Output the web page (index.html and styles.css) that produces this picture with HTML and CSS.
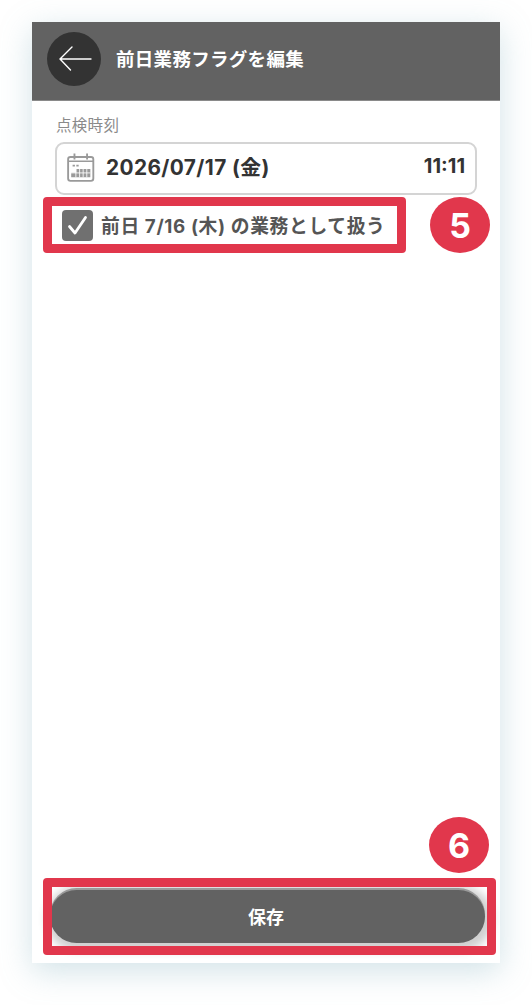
FILE: index.html
```html
<!DOCTYPE html>
<html lang="ja">
<head>
<meta charset="utf-8">
<title>前日業務フラグを編集</title>
<link rel="stylesheet" href="styles.css">
</head>
<body>
<main class="phone">
  <header class="header">
    <button class="back" aria-label="戻る">
      <svg width="54" height="54" viewBox="0 0 54 54" fill="none" stroke="#fff" stroke-width="1.4" stroke-linecap="round"><path d="M13 27H44M25 15L13 27L23.5 38"/></svg>
    </button>
    <h1 class="title">前日業務フラグを編集</h1>
  </header>
  <section class="content">
    <div class="label">点検時刻</div>
    <div class="field">
      <svg class="cal" width="28" height="29" viewBox="0 0 30 31" fill="none">
        <rect x="1.2" y="4.2" width="27" height="25.6" rx="2.5" stroke="#9a9a9a" stroke-width="2"/>
        <path d="M1.500 8.800H28" stroke="#9a9a9a" stroke-width="1.6"/>
        <path d="M8 .5V7M21.500 .5V7" stroke="#9a9a9a" stroke-width="2"/>
        <path d="M6 12.500h2.500v2H6zM10 12.500h2.500v2H10z" fill="#9a9a9a"/>
        <path d="M10 17h15v9H4.500v-5H10z" fill="#9a9a9a"/>
        <path d="M9.500 17v9M13.500 17v9M17.300 17v9M21.200 17v9M4 21.300h21" stroke="#fff" stroke-width=".9"/>
      </svg>
      <span class="date">2026/07/17 (金)</span>
      <span class="time">11:11</span>
    </div>
    <label class="check">
      <span class="box">
        <svg width="31" height="31" viewBox="0 0 31 31" fill="none" stroke="#fff" stroke-width="2.800" stroke-linecap="round" stroke-linejoin="round"><path d="M7.500 16.500L13 23L23.500 7.500"/></svg>
      </span>
      <span class="check-text">前日 7/16 (木) の業務として扱う</span>
    </label>
  </section>
  <footer class="footer">
    <button class="save">保存</button>
  </footer>
</main>
<div class="mark mark-check"></div>
<div class="badge badge-5">5</div>
<div class="badge badge-6">6</div>
<div class="mark mark-save"></div>
</body>
</html>
```
FILE: styles.css
```css
* { box-sizing: border-box; }
html, body { margin: 0; height: 100%; background: #fff; overflow: hidden; }
body {
  position: relative;
  padding: 22px 32px 0;
  font-family: Inter, "Noto Sans CJK JP", sans-serif;
  color: #333;
}
.phone {
  width: 468px;
  height: 941px;
  background: #fff;
  display: flex;
  flex-direction: column;
  box-shadow: 0 8px 30px rgba(120, 170, 185, .34);
}
.header {
  height: 79px;
  flex: none;
  background: #626262;
  border-bottom: 1px solid #8a8a8a;
  display: flex;
  align-items: center;
  gap: 15px;
  padding-left: 15px;
  padding-bottom: 5px;
}
.back {
  width: 54px;
  height: 54px;
  padding: 0;
  border: 0;
  border-radius: 50%;
  background: #333;
}
.back svg { display: block; }
.title {
  margin: 0;
  font-size: 18.5px;
  font-weight: 700;
  line-height: 24px;
  color: #fff;
  letter-spacing: .3px;
}
.content {
  flex: 1;
  padding: 15px 23px 0;
}
.label {
  font-size: 15.5px;
  line-height: 20px;
  color: #8a8a8a;
  letter-spacing: .3px;
  padding-left: 1px;
}
.field {
  margin-top: 6px;
  height: 53px;
  border: 2px solid #d4d4d4;
  border-radius: 9px;
  display: flex;
  align-items: center;
  padding: 0 10px 5px 10px;
}
.cal { flex: none; margin-right: 11px; margin-top: 2px; }
.date, .time {
  font-size: 20.8px;
  font-weight: 700;
  color: #333;
  letter-spacing: .4px;
}
.time { margin-left: auto; font-size: 20px; letter-spacing: 0; }
.check {
  margin-top: 15px;
  padding-left: 7px;
  display: flex;
  align-items: center;
  gap: 8px;
}
.box {
  width: 31px;
  height: 31px;
  border-radius: 4px;
  background: #707070;
}
.box svg { display: block; }
.check-text {
  font-size: 18.8px;
  font-weight: 700;
  color: #555;
  letter-spacing: .62px;
  margin-top: -2px;
}
.footer {
  flex: none;
  padding: 0 15px 20px 18px;
}
.save {
  display: block;
  width: 435px;
  height: 53px;
  padding: 0 3px 2px 0;
  border: 0;
  border-radius: 27px;
  background: #626262;
  color: #fff;
  font: 700 18px Inter, "Noto Sans CJK JP", sans-serif;
  box-shadow: 0 -2px 0 #9a9a9a, 2px 2px 8px 6px #cfcfcf;
}
.mark {
  position: absolute;
  border: 9px solid #e1374c;
  border-radius: 4px;
}
.mark-check { left: 43px; top: 197px; width: 363px; height: 56px; }
.mark-save { left: 43px; top: 878px; width: 453px; height: 77px; }
.badge {
  position: absolute;
  width: 60px;
  height: 56px;
  border-radius: 50%;
  background: #e1374c;
  color: #fff;
  font-size: 34px;
  font-weight: 700;
  display: flex;
  align-items: center;
  justify-content: center;
}
.badge-5 { left: 430px; top: 197px; }
.badge-6 { left: 429px; top: 817px; }
```
